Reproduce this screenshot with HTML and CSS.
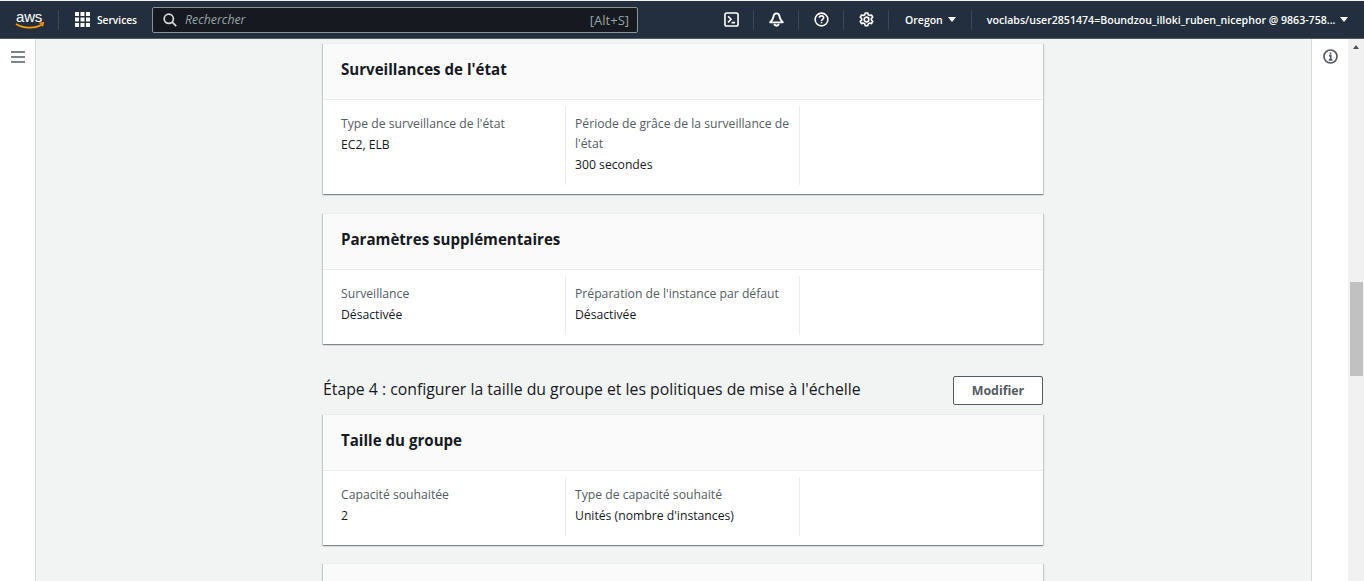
FILE: index.html
```html
<!DOCTYPE html>
<html lang="fr">
<head>
<meta charset="utf-8">
<title>Auto Scaling</title>
<link rel="stylesheet" href="styles.css">
</head>
<body>
<header class="nav">
  <svg class="aws" width="32" height="26" viewBox="0 0 32 26"><text x="1" y="15" class="aws-text">aws</text><path d="M1 17c7 4.500 19 5 26 .5" fill="none" stroke="#f90" stroke-width="1.600"/><path d="M24.500 16.300l3.800-.4-.9 3.400" fill="none" stroke="#f90" stroke-width="1.400"/></svg>
  <span class="nav-sep sep-a"></span>
  <svg class="grid-icon" width="15" height="15" viewBox="0 0 15 15" fill="#fff"><path d="M0 0h4v4H0zM5.500 0h4v4h-4zM11 0h4v4h-4zM0 5.500h4v4H0zM5.500 5.500h4v4h-4zM11 5.500h4v4h-4zM0 11h4v4H0zM5.500 11h4v4h-4zM11 11h4v4h-4z"/></svg>
  <span class="nav-label services">Services</span>
  <div class="search">
    <svg class="icon" width="14" height="14" viewBox="0 0 14 14" fill="none" stroke="#d5dbdb" stroke-width="1.700"><circle cx="5.800" cy="5.800" r="4.600"/><path d="M9.200 9.200l4 4"/></svg>
    <span class="search-text">Rechercher</span>
    <span class="search-key">[Alt+S]</span>
  </div>
  <svg class="icon nav-tool" viewBox="0 0 16 16" fill="none" stroke="#fff" stroke-width="1.700"><rect x="1" y="1" width="14" height="14" rx="2"/><path d="M4.300 4.500l3.200 3.300-3.200 3.300M8 11.300h3.800"/></svg>
  <span class="nav-sep"></span>
  <svg class="icon nav-tool" viewBox="0 0 16 16" fill="none" stroke="#fff" stroke-width="2"><path d="M8 1.500C5.700 1.500 4.900 3.300 4.700 5.200 4.400 7.800 2.900 9.300 1.200 11h13.600c-1.700-1.700-3.200-3.200-3.500-5.800C11.100 3.300 10.300 1.500 8 1.500z" stroke-linejoin="round"/><path d="M5.500 12.600c.3 1.300 1.200 2 2.500 2s2.200-.7 2.500-2"/></svg>
  <span class="nav-sep"></span>
  <svg class="icon nav-tool" viewBox="0 0 16 16" fill="none" stroke="#fff" stroke-width="1.700"><circle cx="8" cy="8" r="6.800"/><path d="M5.700 6.200c0-1.400 1.100-2.100 2.300-2.100s2.300.8 2.300 2c0 1.600-2.300 1.800-2.300 3.400"/><path d="M8 10.400v1.700"/></svg>
  <span class="nav-sep"></span>
  <svg class="icon nav-tool" viewBox="0 0 16 16" fill="none" stroke="#fff" stroke-width="1.700"><path d="M6.600 1h2.800l.4 1.900 1.600.9 1.900-.6 1.400 2.400-1.500 1.300v1.800l1.500 1.300-1.400 2.400-1.900-.6-1.600.9-.4 1.900H6.600l-.4-1.900-1.600-.9-1.900.6-1.400-2.400 1.500-1.300V6.900L1.300 5.600l1.400-2.400 1.900.6 1.600-.9z" stroke-linejoin="round"/><circle cx="8" cy="8" r="2.500"/></svg>
  <span class="nav-sep sep-c"></span>
  <span class="nav-label">Oregon</span>
  <span class="caret"></span>
  <span class="nav-sep sep-b"></span>
  <span class="nav-label account">voclabs/user2851474=Boundzou_illoki_ruben_nicephor @ 9863-758...</span>
  <span class="caret"></span>
</header>
<div class="shell">
  <aside class="side">
    <svg class="icon" width="14" height="12" viewBox="0 0 14 12" fill="none" stroke="#545b64" stroke-width="1.500"><path d="M0 1h14M0 6h14M0 11h14"/></svg>
  </aside>
  <main class="main">
    <div class="column">
      <section class="card">
        <h2 class="card-title">Surveillances de l'état</h2>
        <div class="cols">
          <div class="col"><div class="key">Type de surveillance de l'état</div><div class="val">EC2, ELB</div></div>
          <div class="col"><div class="key">Période de grâce de la surveillance de l'état</div><div class="val">300 secondes</div></div>
          <div class="col col-last"></div>
        </div>
      </section>
      <section class="card">
        <h2 class="card-title">Paramètres supplémentaires</h2>
        <div class="cols">
          <div class="col"><div class="key">Surveillance</div><div class="val">Désactivée</div></div>
          <div class="col"><div class="key">Préparation de l'instance par défaut</div><div class="val">Désactivée</div></div>
          <div class="col col-last"></div>
        </div>
      </section>
      <div class="step">
        <h1 class="step-title">Étape 4 : configurer la taille du groupe et les politiques de mise à l'échelle</h1>
        <button class="btn">Modifier</button>
      </div>
      <section class="card">
        <h2 class="card-title">Taille du groupe</h2>
        <div class="cols">
          <div class="col"><div class="key">Capacité souhaitée</div><div class="val">2</div></div>
          <div class="col"><div class="key">Type de capacité souhaité</div><div class="val">Unités (nombre d'instances)</div></div>
          <div class="col col-last"></div>
        </div>
      </section>
      <section class="card card-stub"></section>
    </div>
  </main>
  <aside class="tools">
    <svg class="icon" width="15" height="15" viewBox="0 0 15 15" fill="none" stroke="#545b64" stroke-width="1.700"><circle cx="7.500" cy="7.500" r="6.500"/><path d="M6 6.700h1.700v4M5.800 10.800h3.600M7.500 3.500v1.800"/></svg>
  </aside>
  <div class="scrollbar">
    <span class="arrow"></span>
    <span class="thumb"></span>
  </div>
</div>
</body>
</html>
```
FILE: styles.css
```css
* { box-sizing: border-box; }
html, body { margin: 0; height: 100%; overflow: hidden; }
body {
  font-family: "Open Sans", "Liberation Sans", sans-serif;
  font-size: 13px;
  color: #16191f;
  background: #f2f3f3;
  display: flex;
  flex-direction: column;
}
.icon { display: block; flex: none; }
.nav {
  height: 38px;
  flex: none;
  margin-top: 1px;
  background: #232f3e;
  border-bottom: 1px solid #545b64;
  display: flex;
  align-items: center;
  padding-left: 15px;
  color: #fff;
}
.aws { flex: none; }
.aws-text { font-family: "Liberation Sans", sans-serif; font-size: 15px; fill: #fff; letter-spacing: -.2px; }
.nav-sep { width: 1px; height: 20px; background: #414750; flex: none; margin: 0 15px 0 14px; }
.sep-a { margin: 0 16px 0 11px; }
.sep-b { margin: 0 15px; }
.sep-c { margin: 0 16px 0 14px; }
.grid-icon { flex: none; }
.nav-label { font-size: 10.500px; font-weight: 600; white-space: nowrap; }
.services { font-size: 10.200px; margin: 0 15px 0 7px; }
.account { font-size: 10.600px; }
.search {
  width: 486px;
  height: 26px;
  flex: none;
  background: #16191f;
  border: 1px solid #879596;
  border-radius: 2px;
  display: flex;
  align-items: center;
  padding: 0 8px 0 10px;
  margin-right: 86px;
}
.search-text { font-style: italic; font-size: 12.300px; color: #95a5a6; margin-left: 8px; flex: 1; }
.search-key { font-size: 13px; color: #95a5a6; }
.nav-tool { width: 15px; height: 15px; }
.caret {
  width: 0; height: 0; flex: none;
  border-left: 4px solid transparent;
  border-right: 4px solid transparent;
  border-top: 5px solid #fff;
  margin-left: 5px;
}
.shell { flex: 1; display: flex; min-height: 0; }
.side {
  width: 36px; flex: none;
  background: #fff;
  border-right: 1px solid #d5dbdb;
  padding: 12px 0 0 11px;
}
.main { flex: 1; min-width: 0; overflow: hidden; padding: 4px 0 0 287px; }
.column { width: 720px; }
.card {
  background: #fff;
  border-top: 1px solid #eaeded;
  box-shadow: 0 1px 1px 0 rgba(0,28,36,.3), 1px 1px 1px 0 rgba(0,28,36,.15), -1px 1px 1px 0 rgba(0,28,36,.15);
  margin-bottom: 19px;
}
.step + .card { margin-bottom: 18px; }
.card-title {
  margin: 0;
  height: 56px;
  padding: 0 18px 6px;
  display: flex;
  align-items: center;
  font-size: 15.100px;
  font-weight: 700;
  color: #16191f;
  background: #fafafa;
  border-bottom: 1px solid #eaeded;
}
.cols { display: grid; grid-template-columns: 225px 234px 1fr; padding: 6px 18px 9px; }
.col { border-right: 1px solid #eaeded; padding: 8px 5px 10px 9px; }
.col:first-child { padding-left: 0; }
.col-last { border-right: 0; }
.key { font-size: 12.200px; line-height: 20px; color: #545b64; }
.val { font-size: 12.200px; line-height: 20px; margin-top: 1px; color: #16191f; }
.step { height: 29px; margin: 32px 0 9px; display: flex; align-items: center; justify-content: space-between; }
.step-title { margin: 0 0 3px; font-size: 15.800px; font-weight: 400; color: #16191f; }
.btn {
  width: 90px; height: 29px;
  background: #fff;
  border: 1px solid #545b64;
  border-radius: 2px;
  font-family: inherit;
  font-size: 12.400px;
  font-weight: 700;
  color: #545b64;
  padding: 0;
}
.card-stub { height: 80px; background: #fafafa; }
.tools {
  width: 37px; flex: none;
  background: #fff;
  border-left: 1px solid #d5dbdb;
  padding: 10px 0 0 11px;
}
.scrollbar { width: 16px; flex: none; background: #f1f1f1; position: relative; }
.thumb { position: absolute; left: 2px; right: 1px; top: 243px; height: 94px; background: #c1c1c1; }
.arrow { position: absolute; left: 5px; top: 6px; width: 0; height: 0; border-left: 3.500px solid transparent; border-right: 3.500px solid transparent; border-bottom: 4px solid #505050; }
```
